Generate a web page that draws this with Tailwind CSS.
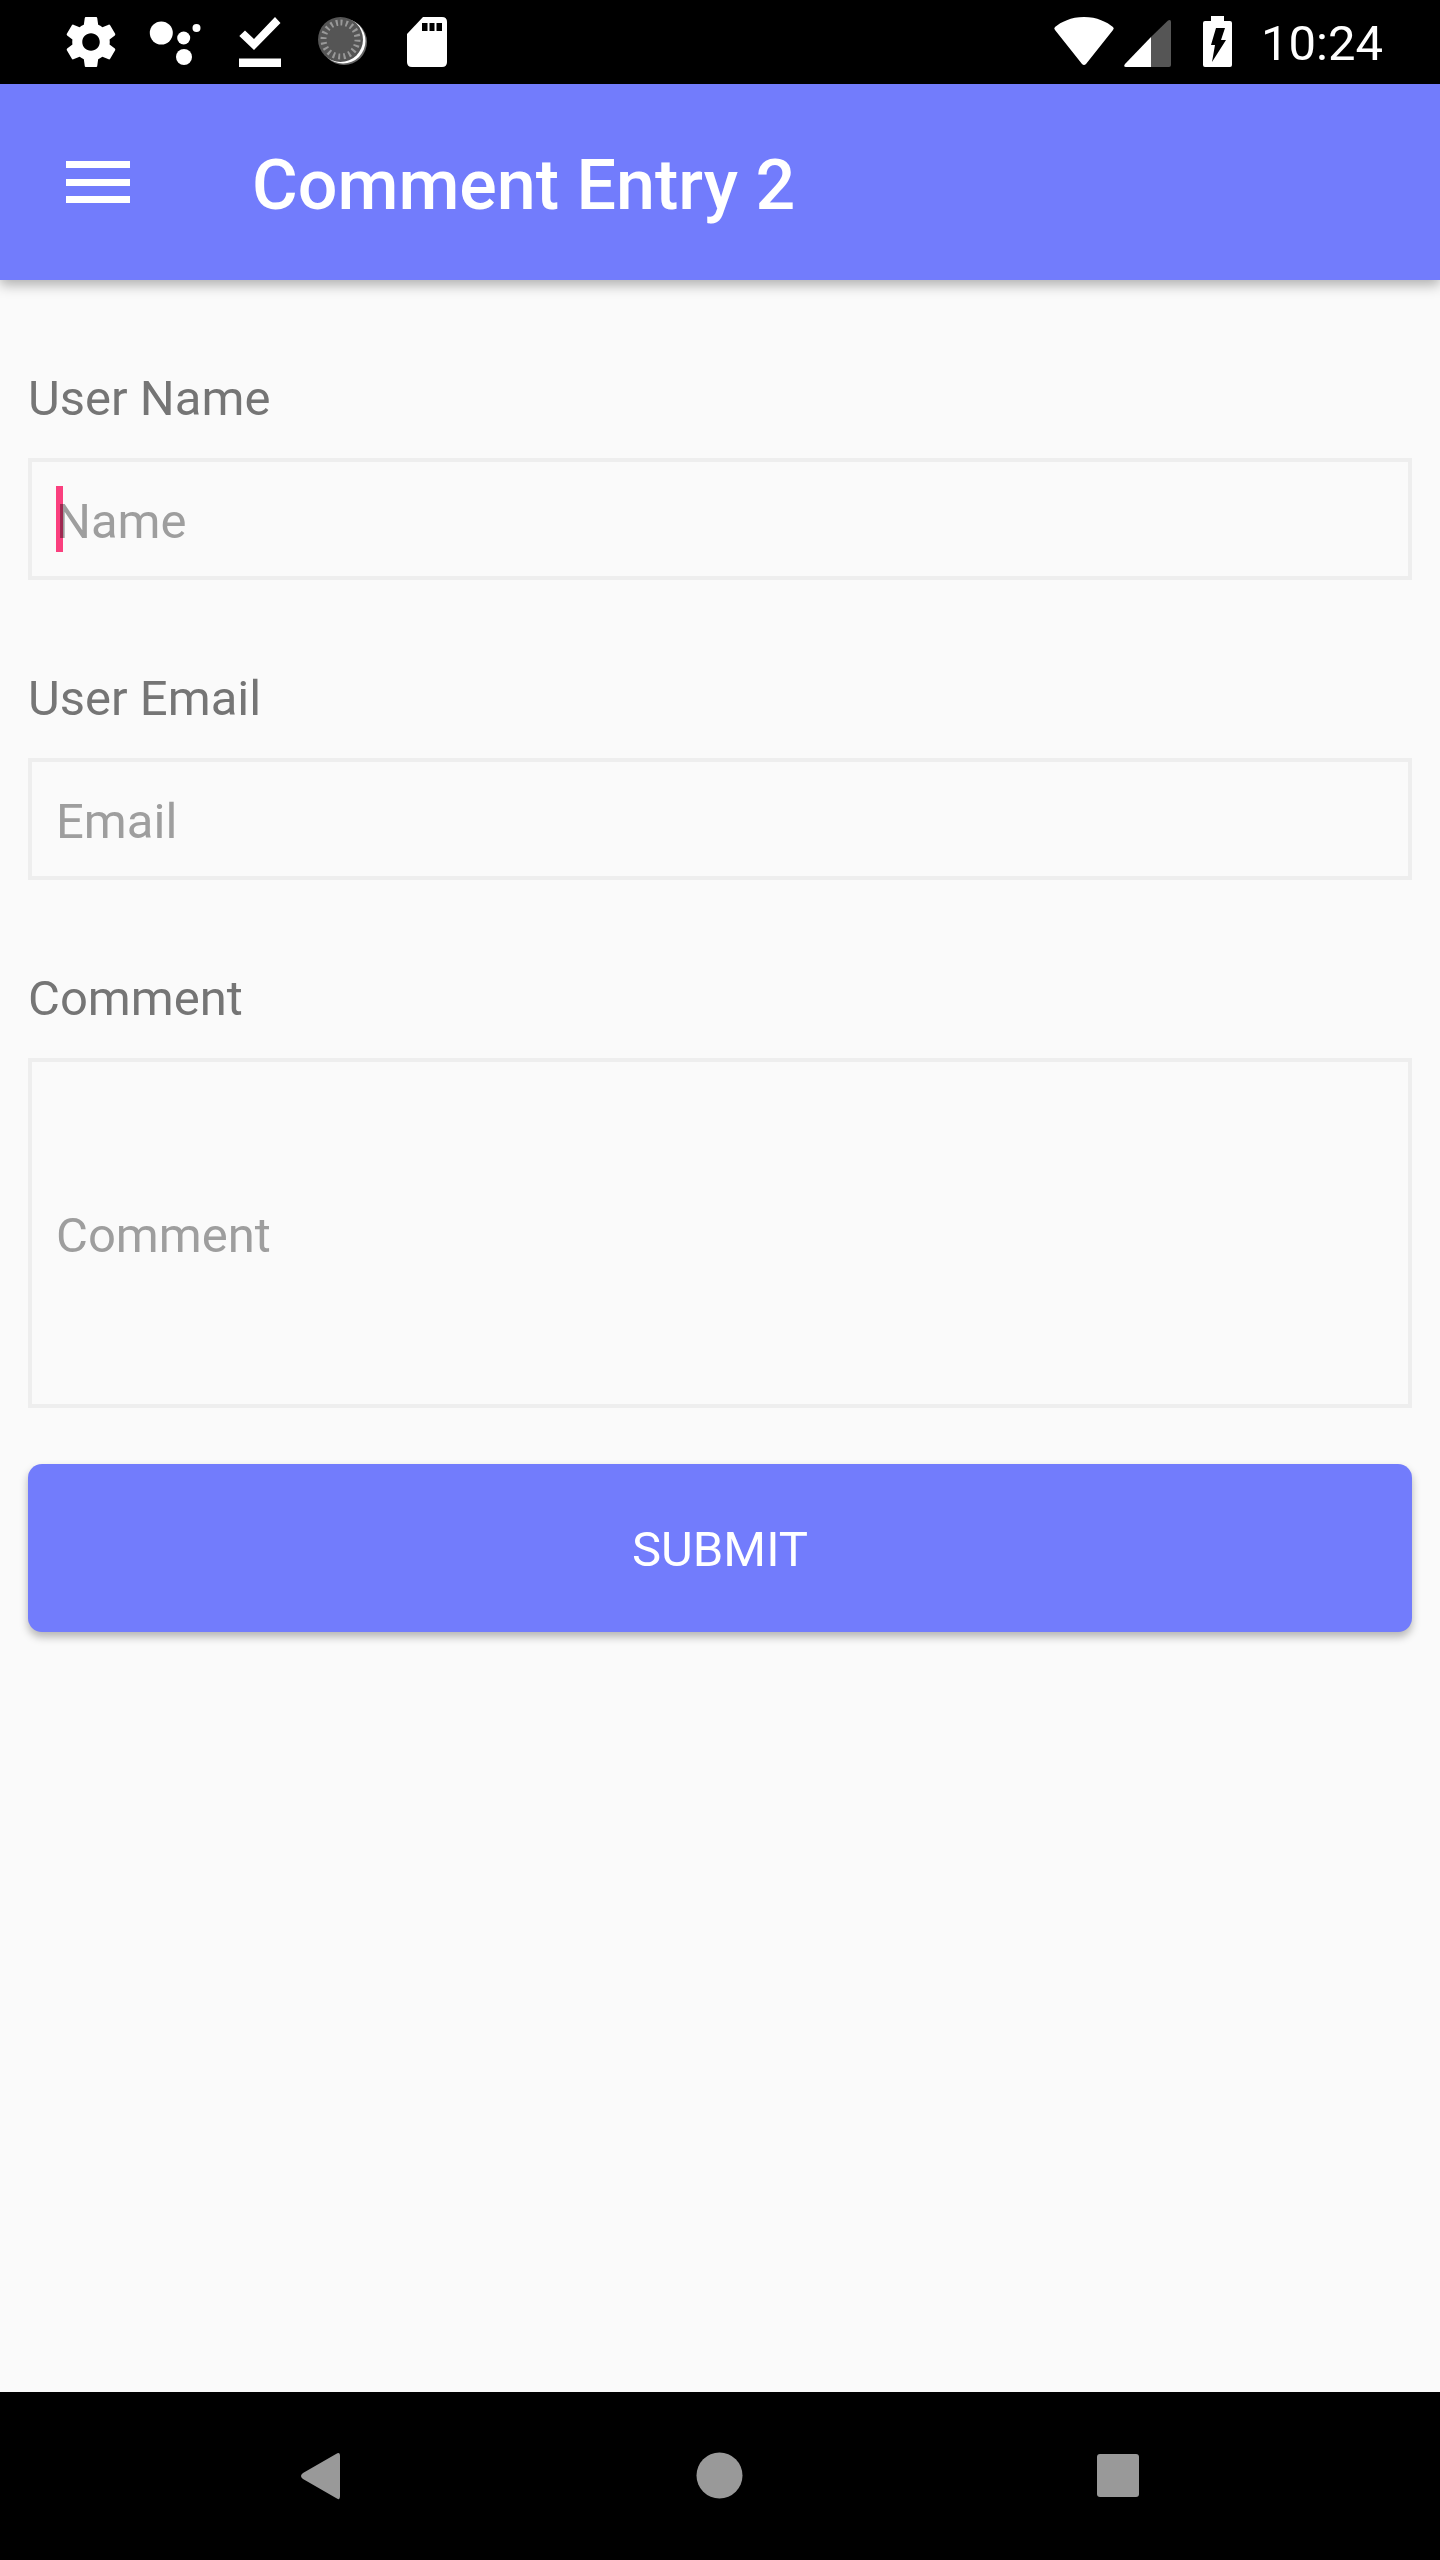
<!DOCTYPE html>
<html lang="en">
<head>
  <meta charset="UTF-8" />
  <meta name="viewport" content="width=device-width, initial-scale=1.0"/>
  <title>Comment Entry 2</title>
  <script src="https://cdn.jsdelivr.net/npm/@tailwindcss/browser@4"></script>
</head>
<body class="bg-[#fafafa] font-['Roboto',sans-serif]">
<div class="flex flex-col h-[2560px] w-[1440px] overflow-hidden">

  <!-- Status bar -->
  <div class="h-[84px] bg-black text-white flex items-start shrink-0 relative">
    <svg width="1440" height="84" viewBox="0 0 1440 84" class="absolute inset-0">
      <!-- settings -->
      <svg x="66" y="17" width="50" height="50" viewBox="2 2 20 20"><path fill="#fff" d="M19.43 12.98c.04-.32.07-.64.07-.98s-.03-.66-.07-.98l2.11-1.65c.19-.15.24-.42.12-.64l-2-3.46c-.12-.22-.39-.3-.61-.22l-2.49 1c-.52-.4-1.08-.73-1.69-.98l-.38-2.65C14.46 2.18 14.25 2 14 2h-4c-.25 0-.46.18-.49.42l-.38 2.65c-.61.25-1.17.59-1.69.98l-2.49-1c-.23-.09-.49 0-.61.22l-2 3.46c-.13.22-.07.49.12.64l2.11 1.65c-.04.32-.07.65-.07.98s.03.66.07.98l-2.11 1.65c-.19.15-.24.42-.12.64l2 3.46c.12.22.39.3.61.22l2.49-1c.52.4 1.08.73 1.69.98l.38 2.65c.03.24.24.42.49.42h4c.25 0 .46-.18.49-.42l.38-2.65c.61-.25 1.17-.59 1.69-.98l2.49 1c.23.09.49 0 .61-.22l2-3.46c.12-.22.07-.49-.12-.64l-2.11-1.65zM12 15.5c-1.93 0-3.5-1.57-3.5-3.5s1.57-3.5 3.5-3.5 3.5 1.57 3.5 3.5-1.57 3.5-3.5 3.5z"/></svg>
      <!-- dots -->
      <g fill="#fff">
        <circle cx="161.3" cy="33" r="11.5"/>
        <circle cx="183.7" cy="38" r="6.5"/>
        <circle cx="196.5" cy="28" r="4"/>
        <circle cx="184" cy="57" r="8"/>
      </g>
      <!-- download done -->
      <path fill="#fff" d="M275 17 L280.5 23 L254 50 L239.3 36 L245 30.5 L254 39 Z M239 58.5 H281 V67 H239 Z"/>
      <!-- dial -->
      <circle cx="344" cy="42" r="23" fill="#666"/>
      <circle cx="343" cy="41" r="22.5" fill="#fff"/>
      <circle cx="340.5" cy="39.5" r="22.5" fill="#555"/>
      <circle cx="340.5" cy="39.5" r="17" fill="none" stroke="#999" stroke-width="6" stroke-dasharray="2 3.34" transform="rotate(-90 340.5 39.5)"/>
      <!-- sd card -->
      <path fill="#fff" d="M423 17 H442 Q447 17 447 22 V62 Q447 67 442 67 H412 Q407 67 407 62 V34 Z"/>
      <path fill="#000" d="M422 23 H427.5 V31 H422 Z M429.5 23 H434.5 V31 H429.5 Z M436.5 23 H442 V31 H436.5 Z"/>
      <!-- wifi -->
      <path fill="#fff" d="M1084 17 C1097 17 1107 22 1113 27 Q1114.500 28.500 1113 30 L1086 64 Q1084 66 1082 64 L1055 30 Q1053.500 28.500 1055 27 C1061 22 1071 17 1084 17 Z"/>
      <!-- signal -->
      <path fill="#fff" d="M1151 37 V67 H1126 Q1123 67 1125 64 Z"/>
      <path fill="#555" d="M1151 37 L1168 20.500 Q1171 19 1171 22 V65 Q1171 67 1169 67 H1151 Z"/>
      <!-- battery -->
      <path fill="#fff" d="M1211 16 H1224 V21 H1230 Q1232 21 1232 23 V65 Q1232 67 1230 67 H1205 Q1203 67 1203 65 V23 Q1203 21 1205 21 H1211 Z"/>
      <path fill="#000" d="M1216 28 H1225 L1221 40 H1226 L1212 62 L1215 45 H1211 Z"/>
    </svg>
    <span class="absolute left-[1261px] top-[15px] text-[49px] leading-[58px]">10:24</span>
  </div>

  <!-- App bar -->
  <header class="relative z-10 h-[196px] shrink-0 bg-[#727cfc] shadow-[0_5px_12px_rgba(0,0,0,0.3)] flex items-center pl-[66px] text-white">
    <div class="w-[64px] h-[42px] flex flex-col justify-between">
      <div class="h-[7px] bg-white"></div>
      <div class="h-[7px] bg-white"></div>
      <div class="h-[7px] bg-white"></div>
    </div>
    <h1 class="ml-[122px] mt-[6px] text-[70px] font-medium leading-none">Comment Entry 2</h1>
  </header>

  <!-- Form -->
  <main class="flex-1 px-[28px] pt-[90px]">
    <label class="block text-[49px] leading-[58px] text-[#757575] mb-[30px]">User Name</label>
    <div class="relative mb-[90px]">
      <input type="text" placeholder="Name" class="w-full h-[122px] border-4 border-[#eeeeee] bg-transparent pl-[24px] pt-[4px] text-[49px] outline-none placeholder:text-[#9e9e9e]" />
      <div class="absolute left-[28px] top-[28px] w-[7px] h-[66px] bg-[#ff4081] mix-blend-multiply"></div>
    </div>

    <label class="block text-[49px] leading-[58px] text-[#757575] mb-[30px]">User Email</label>
    <input type="text" placeholder="Email" class="block w-full h-[122px] border-4 border-[#eeeeee] bg-transparent pl-[24px] pt-[4px] text-[49px] outline-none placeholder:text-[#9e9e9e] mb-[90px]" />

    <label class="block text-[49px] leading-[58px] text-[#757575] mb-[30px]">Comment</label>
    <textarea placeholder="Comment" class="block w-full h-[350px] border-4 border-[#eeeeee] bg-transparent pl-[24px] pt-[145px] text-[49px] leading-[58px] resize-none outline-none placeholder:text-[#9e9e9e] mb-[56px]"></textarea>

    <button class="block w-full h-[168px] rounded-[14px] bg-[#727cfc] text-white text-[49px] pt-[4px] shadow-[0_5px_8px_rgba(0,0,0,0.28)]">SUBMIT</button>
  </main>

  <!-- Navigation bar -->
  <nav class="h-[168px] shrink-0 bg-black relative">
    <svg width="1440" height="168" viewBox="0 2392 1440 168" class="absolute inset-0">
      <path fill="#999" d="M336 2454 Q340 2451 340 2456 V2496 Q340 2501 336 2498 L303 2479 Q299 2476 303 2473 Z"/>
      <circle cx="719.500" cy="2475.500" r="23" fill="#999"/>
      <rect x="1097" y="2454" width="42" height="43" rx="3" fill="#999"/>
    </svg>
  </nav>
</div>
</body>
</html>
